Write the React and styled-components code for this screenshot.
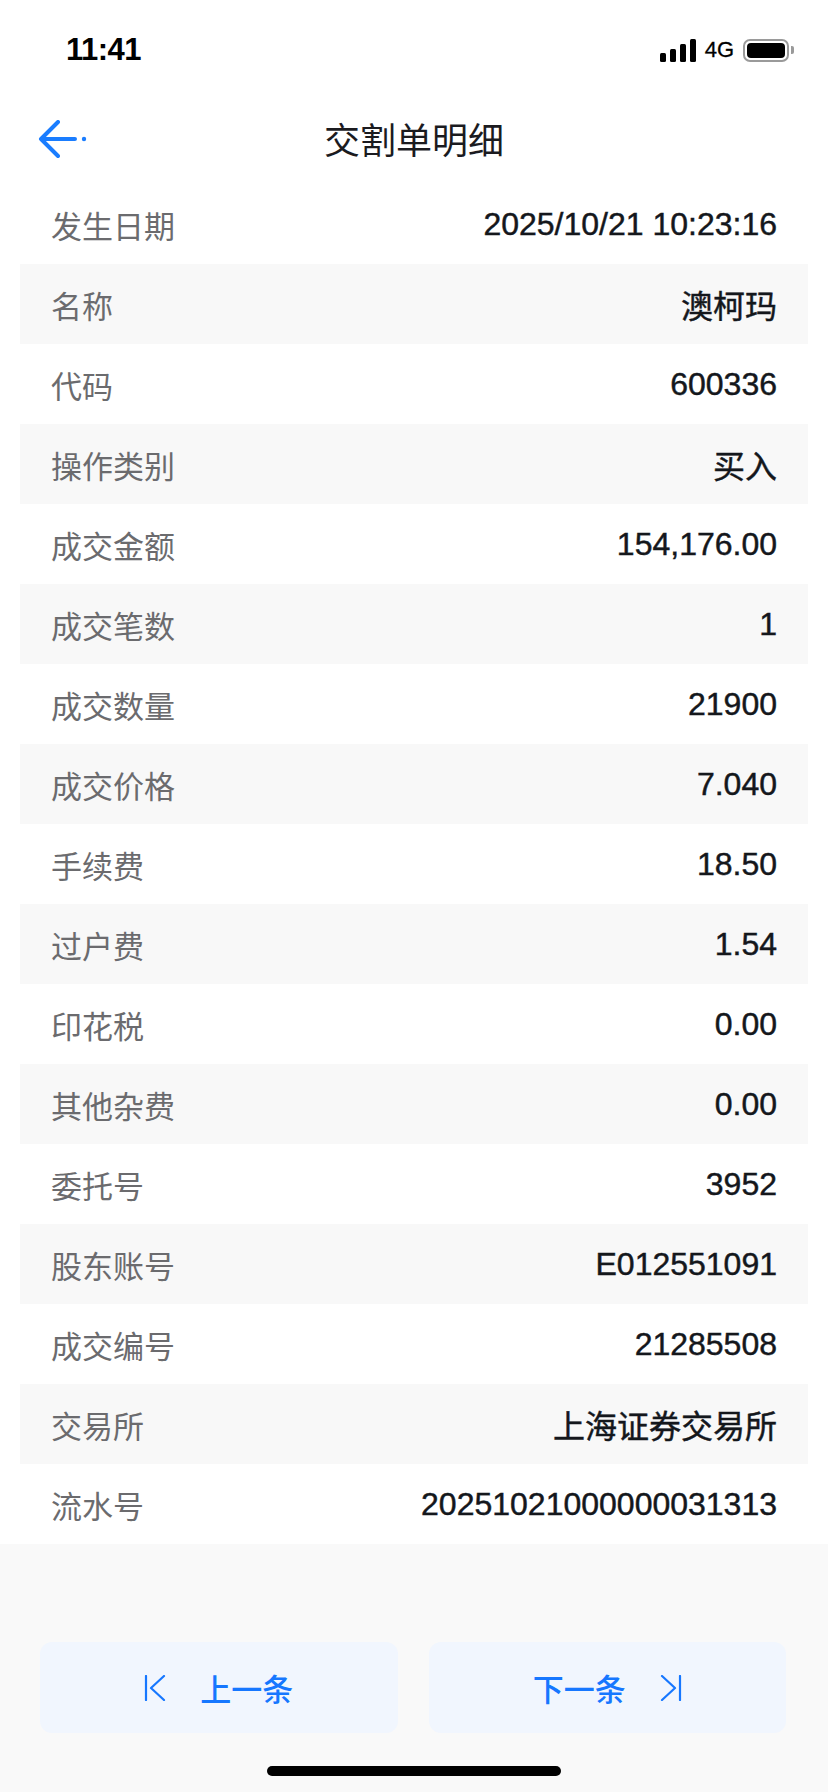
import React from "react";
import styled, { createGlobalStyle } from "styled-components";

const GlobalStyle = createGlobalStyle`
  html, body { margin: 0; padding: 0; background: #ffffff; }
  body {
    font-family: "Liberation Sans", "Noto Sans CJK SC", sans-serif;
    -webkit-font-smoothing: antialiased;
  }
  * { box-sizing: border-box; }
`;

const Page = styled.div`
  width: 828px;
  min-height: 1792px;
  display: flex;
  flex-direction: column;
  background: #ffffff;
`;

const StatusBar = styled.div`
  height: 96px;
  padding: 4px 34px 0 66px;
  display: flex;
  align-items: center;
  justify-content: space-between;
`;

const Time = styled.span`
  font-family: "Liberation Sans", sans-serif;
  font-weight: 700;
  font-size: 31px;
  letter-spacing: -0.5px;
  color: #000;
`;

const StatusIcons = styled.div`
  display: flex;
  align-items: center;
  gap: 9px;
`;

const NetText = styled.span`
  font-family: "Liberation Sans", sans-serif;
  font-size: 22px;
  font-weight: 400;
  color: #000;
  -webkit-text-stroke: 0.3px #000;
`;

const Battery = styled.div`
  display: flex;
  align-items: center;
  gap: 2px;
`;

const BatteryBody = styled.div`
  width: 46px;
  height: 23px;
  border: 2px solid #9a9a9a;
  border-radius: 7px;
  padding: 2px;
  display: flex;
`;

const BatteryFill = styled.div`
  flex: 1;
  background: #000;
  border-radius: 4px;
`;

const BatteryNub = styled.div`
  width: 3px;
  height: 8px;
  background: #9a9a9a;
  border-radius: 0 2px 2px 0;
`;

const Header = styled.div`
  height: 88px;
  display: grid;
  grid-template-columns: 1fr auto 1fr;
  align-items: center;
  padding: 0 38px;
`;

const BackButton = styled.div`
  display: flex;
  align-items: center;
  justify-self: start;
`;

const Title = styled.h1`
  margin: 0 0 4px;
  font-family: "Noto Sans CJK SC", sans-serif;
  font-weight: 400;
  font-size: 36px;
  color: #1b1b1f;
`;

const List = styled.div`
  display: flex;
  flex-direction: column;
`;

const Row = styled.div`
  height: 80px;
  margin: 0 20px;
  padding: 0 31px;
  display: flex;
  align-items: center;
  justify-content: space-between;
  background: ${(p) => (p.$striped ? "#f8f8f8" : "transparent")};
`;

const Label = styled.span`
  font-family: "Noto Sans CJK SC", sans-serif;
  font-size: 31px;
  font-weight: 400;
  color: #6b6b6e;
`;

const Value = styled.span`
  font-family: "Liberation Sans", "Noto Sans CJK SC", sans-serif;
  font-size: 32px;
  font-weight: 400;
  color: #14171c;
  -webkit-text-stroke: ${(p) => (p.$cjk ? "0.45px" : "0.45px")} #14171c;
`;

const Footer = styled.div`
  flex: 1;
  background: #f9f9f9;
  padding: 98px 42px 16px 40px;
  display: flex;
  flex-direction: column;
`;

const ButtonRow = styled.div`
  display: grid;
  grid-template-columns: 1fr 1fr;
  gap: 31px;
`;

const NavButton = styled.button`
  height: 91px;
  border: none;
  border-radius: 12px;
  background: #f1f6fe;
  color: #1677ff;
  display: flex;
  align-items: center;
  justify-content: center;
  gap: 34px;
  font-family: "Noto Sans CJK SC", sans-serif;
  font-size: 31px;
  font-weight: 500;
  padding: 0;
  cursor: pointer;
`;

const HomeIndicator = styled.div`
  width: 294px;
  height: 10px;
  border-radius: 5px;
  background: #000;
  align-self: center;
  margin-top: auto;
  margin-left: 2px;
`;

const rows = [
  ["发生日期", "2025/10/21 10:23:16"],
  ["名称", "澳柯玛", true],
  ["代码", "600336"],
  ["操作类别", "买入", true],
  ["成交金额", "154,176.00"],
  ["成交笔数", "1"],
  ["成交数量", "21900"],
  ["成交价格", "7.040"],
  ["手续费", "18.50"],
  ["过户费", "1.54"],
  ["印花税", "0.00"],
  ["其他杂费", "0.00"],
  ["委托号", "3952"],
  ["股东账号", "E012551091"],
  ["成交编号", "21285508"],
  ["交易所", "上海证券交易所", true],
  ["流水号", "20251021000000031313"],
];

const SignalIcon = () => (
  <svg width="36" height="23" viewBox="0 0 36 23">
    <rect x="0" y="14" width="6" height="9" rx="1.5" fill="#000" />
    <rect x="10" y="10" width="6" height="13" rx="1.5" fill="#000" />
    <rect x="20" y="5" width="6" height="18" rx="1.5" fill="#000" />
    <rect x="30" y="0" width="6" height="23" rx="1.5" fill="#000" />
  </svg>
);

const BackIcon = () => (
  <svg width="50" height="40" viewBox="0 0 50 40">
    <path
      d="M20 2 L3 19 L20 36 M3 19 L37 19"
      fill="none"
      stroke="#1a7dff"
      strokeWidth="4"
      strokeLinecap="round"
      strokeLinejoin="round"
    />
    <circle cx="46" cy="19" r="2.2" fill="#1a7dff" />
  </svg>
);

const PrevIcon = () => (
  <svg width="22" height="26" viewBox="0 0 22 26">
    <path
      d="M2 1 L2 25 M20 1 L7 13 L20 25"
      fill="none"
      stroke="#1677ff"
      strokeWidth="2.2"
      strokeLinecap="round"
      strokeLinejoin="round"
    />
  </svg>
);

const NextIcon = () => (
  <svg width="22" height="26" viewBox="0 0 22 26">
    <path
      d="M20 1 L20 25 M2 1 L15 13 L2 25"
      fill="none"
      stroke="#1677ff"
      strokeWidth="2.2"
      strokeLinecap="round"
      strokeLinejoin="round"
    />
  </svg>
);

export default function App() {
  return (
    <>
      <GlobalStyle />
      <Page>
        <StatusBar>
          <Time>11:41</Time>
          <StatusIcons>
            <SignalIcon />
            <NetText>4G</NetText>
            <Battery>
              <BatteryBody>
                <BatteryFill />
              </BatteryBody>
              <BatteryNub />
            </Battery>
          </StatusIcons>
        </StatusBar>
        <Header>
          <BackButton>
            <BackIcon />
          </BackButton>
          <Title>交割单明细</Title>
          <div />
        </Header>
        <List>
          {rows.map(([label, value, cjk], i) => (
            <Row key={label} $striped={i % 2 === 1}>
              <Label>{label}</Label>
              <Value $cjk={cjk}>{value}</Value>
            </Row>
          ))}
        </List>
        <Footer>
          <ButtonRow>
            <NavButton>
              <PrevIcon />
              <span>上一条</span>
            </NavButton>
            <NavButton>
              <span>下一条</span>
              <NextIcon />
            </NavButton>
          </ButtonRow>
          <HomeIndicator />
        </Footer>
      </Page>
    </>
  );
}
